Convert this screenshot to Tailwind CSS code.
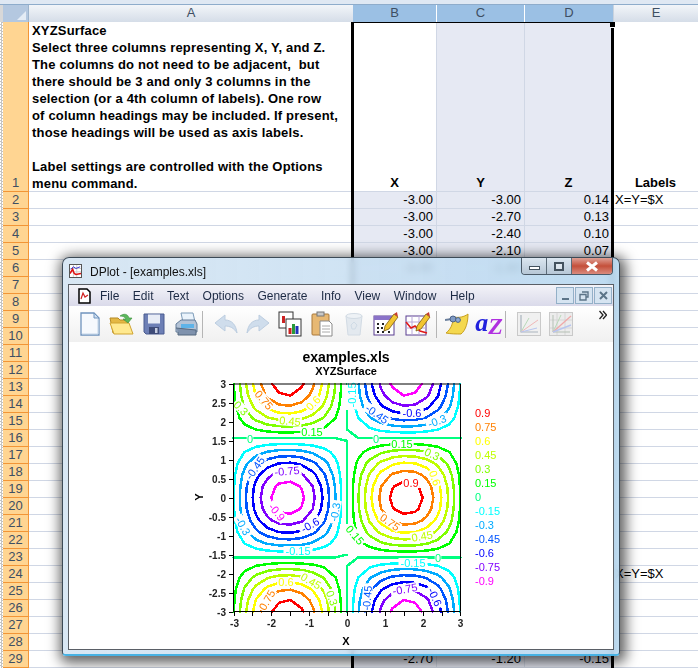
<!DOCTYPE html>
<html lang="en">
<head>
<meta charset="UTF-8" />
<title>DPlot - examples.xls</title>
<script src="https://cdn.jsdelivr.net/npm/@tailwindcss/browser@4"></script>
</head>
<body class="relative w-[698px] h-[668px] overflow-hidden bg-white font-['Liberation_Sans',sans-serif] text-black">

<!-- Spreadsheet -->
<div class="h-[5px] bg-[#dfe8f3] border-b border-[#8eaccb]"></div>
<div class="flex h-[17px] text-[13px] leading-[16px] text-[#3e4f63] text-center">
	<div class="w-[3px] bg-[#d8d8d8]"></div>
	<div class="w-[26px] bg-[#b4c8e0] border-r border-[#9db4cc] flex items-end justify-end p-[2px]"><div class="w-0 h-0 border-l-[9px] border-l-transparent border-b-[9px] border-b-[#e4ecf5]"></div></div>
	<div class="w-[324px] bg-linear-to-b from-[#f2f5f9] to-[#d5dde8]">A</div>
	<div class="w-[84px] bg-[#9bc0e4] border-r border-white">B</div>
	<div class="w-[88px] bg-[#9bc0e4] border-r border-white">C</div>
	<div class="w-[88px] bg-[#9bc0e4]">D</div>
	<div class="flex-1 bg-linear-to-b from-[#f2f5f9] to-[#d5dde8] border-l border-[#c8d2de]">E</div>
</div>
<div class="flex h-[170px] text-[13px] leading-[17px]">
	<div class="w-[3px] bg-[repeating-conic-gradient(#c4c4c4_0_25%,#ffffff_0_50%)] bg-[length:3px_3px]"></div>
	<div class="w-[26px] bg-[#ffd592] border-r border-b border-[#f29536] text-[#3e4f63] text-center flex items-end justify-center">1</div>
	<div class="w-[324px] border-b border-[#d0d7e5] pl-[3px] font-bold tracking-[0.18px]">
		XYZSurface<br />
		Select three columns representing X, Y, and Z.<br />
		The columns do not need to be adjacent,&nbsp; but<br />
		there should be 3 and only 3 columns in the<br />
		selection (or a 4th column of labels). One row<br />
		of column headings may be included. If present,<br />
		those headings will be used as axis labels.<br />
		<br />
		Label settings are controlled with the Options<br />
		menu command.
	</div>
	<div class="w-[84px] border-r border-b border-[#d0d7e5] flex items-end justify-center font-bold">X</div>
	<div class="w-[88px] bg-[#e6e9f3] border-r border-b border-[#d0d7e5] flex items-end justify-center font-bold">Y</div>
	<div class="w-[88px] bg-[#e6e9f3] border-r border-b border-[#d0d7e5] flex items-end justify-center font-bold">Z</div>
	<div class="flex-1 border-b border-[#d0d7e5] flex items-end justify-center font-bold">Labels</div>
</div>
<div id="rows"></div>

<!-- Selection outline -->
<div class="absolute left-[351px] top-[22px] w-[263px] h-[646px] border-l-[3px] border-r-[3px] border-t border-black"></div>
<div class="absolute left-[610px] top-[22px] w-[5px] h-[6px] bg-black border-b border-white"></div>

<!-- DPlot window -->
<div class="absolute left-[62px] top-[257px] w-[558px] h-[399px] flex flex-col rounded-t-[7px] rounded-b-[4px] border border-[#3c4a56] border-b-[2px] border-b-[#47b2e4] px-[5px] pb-[4px] bg-linear-to-r from-[#d4e4f2]/90 via-[#c8dff2]/85 to-[#b9d9f0]/90 backdrop-blur-[3px] shadow-[2px_3px_13px_4px_rgba(0,0,0,0.62)]">
	<div class="h-[26px] flex">
		<svg class="w-[13px] h-[14px] ml-[1px] mt-[6px] bg-white border border-[#555]" viewBox="0 0 13 14">
			<path d="M0 4H13M0 8H13M4 0V14M8 0V14" stroke="#c9c9c9" stroke-width="1" />
			<path d="M0 10L3 5L5 10L7 11L13 10" stroke="#e01010" stroke-width="1.8" fill="none" />
			<path d="M1 5L4 2L7 4L12 2" stroke="#1a1ad0" stroke-width="1" fill="none" />
		</svg>
		<div class="ml-[8px] mt-[6px] text-[12px] leading-[16px] text-[#111]">DPlot - [examples.xls]</div>
		<div class="ml-auto mr-[1px] flex h-[17px] rounded-b-[4px] overflow-hidden border border-t-0 border-[#4b5a68]">
			<div class="w-[25px] bg-linear-to-b from-[#dbe6f0] to-[#b7c7d6] border-r border-[#5c6b78] flex items-center justify-center"><div class="w-[11px] h-[4px] mt-[4px] bg-white border border-[#44525e]"></div></div>
			<div class="w-[25px] bg-linear-to-b from-[#dbe6f0] to-[#b7c7d6] border-r border-[#5c6b78] flex items-center justify-center"><div class="w-[10px] h-[9px] border-[2px] border-[#44525e] bg-white/40"></div></div>
			<div class="w-[40px] bg-linear-to-b from-[#dd9f95] via-[#c44f3a] to-[#d98a7d] flex items-center justify-center">
				<svg class="w-[14px] h-[11px]" viewBox="0 0 14 11"><path d="M2 1.5L12 9.5M12 1.5L2 9.5" stroke="#fff" stroke-width="3" /></svg>
			</div>
		</div>
	</div>
	<div class="h-[366px] flex flex-col border border-[#5a5f66] bg-white">
		<!-- Menu -->
		<div class="h-[21px] flex items-center bg-linear-to-b from-[#f3f3f8] to-[#dadaea] text-[12px] text-[#1c2a44]">
			<svg class="w-[13px] h-[16px] ml-[9px] mr-[9px]" viewBox="0 0 13 16">
				<path d="M1 1H9L12 4V15H1Z" fill="#fff" stroke="#000" stroke-width="1.5" />
				<path d="M3 11L5 5L7 9L10 7" stroke="#d02020" stroke-width="1.2" fill="none" />
			</svg>
			<div class="flex gap-[13.5px]">
				<span>File</span><span>Edit</span><span>Text</span><span>Options</span><span>Generate</span><span>Info</span><span>View</span><span>Window</span><span>Help</span>
			</div>
			<div class="ml-auto mr-[1px] flex gap-[1px]">
				<div class="w-[18px] h-[17px] bg-[#d6e4f1] border border-[#93b0c8] flex items-end justify-center pb-[3px]"><div class="w-[7px] h-[2px] bg-[#5c7488]"></div></div>
				<div class="w-[18px] h-[17px] bg-[#d6e4f1] border border-[#93b0c8] flex items-center justify-center">
					<svg class="w-[10px] h-[10px]" viewBox="0 0 10 10"><path d="M3 1H9V6H7M1 3.5H7V9H1Z" fill="none" stroke="#5c7488" stroke-width="1.4" /></svg>
				</div>
				<div class="w-[18px] h-[17px] bg-[#d6e4f1] border border-[#93b0c8] flex items-center justify-center">
					<svg class="w-[9px] h-[9px]" viewBox="0 0 9 9"><path d="M1 1L8 8M8 1L1 8" stroke="#5c7488" stroke-width="2" /></svg>
				</div>
			</div>
		</div>
		<!-- Toolbar -->
		<div class="relative h-[36px] flex items-center pl-[5px] bg-linear-to-b from-[#ffffff] to-[#f0f0f0]">
			<div class="w-8 flex justify-center"><svg class="w-[24px] h-[26px]" viewBox="0 0 24 26">
				<path d="M3 2H16L21 7V24H3Z" fill="#f6f9fd" stroke="#6f93bd" stroke-width="1.3" />
				<path d="M16 2V7H21Z" fill="#cfdff0" stroke="#6f93bd" />
				<path d="M4 23H20V8" fill="none" stroke="#c4d5e8" />
			</svg></div>
			<div class="w-8 flex justify-center"><svg class="w-[26px] h-[24px]" viewBox="0 0 26 24">
				<path d="M1 6H9L11 8H19V21H4Z" fill="#e4b844" stroke="#b58a26" />
				<path d="M1 11H20L24 22H5Z" fill="#ffe98f" stroke="#d0a432" />
				<path d="M11 4C15 1 19 2 20 6L23 6L19 11L14 7L17 7C16 5 14 4 11 4Z" fill="#5cb85c" stroke="#3b8f3b" stroke-width=".6" />
			</svg></div>
			<div class="w-8 flex justify-center"><svg class="w-[22px] h-[22px]" viewBox="0 0 22 22">
				<path d="M1 1H21V21H3L1 19Z" fill="#6d7fb5" stroke="#4b5c90" />
				<rect x="5" y="1.5" width="12" height="9" fill="#e8ecf6" />
				<rect x="6" y="14" width="10" height="7" fill="#3e4b78" />
				<rect x="12" y="15" width="2.5" height="5" fill="#c6cde0" />
			</svg></div>
			<div class="w-8 flex justify-center"><svg class="w-[26px] h-[26px]" viewBox="0 0 26 26">
				<path d="M8 2H20L22 11H10Z" fill="#eaf3fb" stroke="#7d9cb9" />
				<path d="M3 13L8 9H22L24 13V21H3Z" fill="#b4c3d6" stroke="#647d99" />
				<path d="M5 21V24H23V19L3 17" fill="#7f92ad" stroke="#55697f" />
				<path d="M8 13H21V17H8Z" fill="#5fb3e8" />
			</svg></div>
			<div class="w-2 flex justify-start"><div class="w-px h-[27px] bg-[#b5b5b5]"></div></div>
			<div class="w-8 flex justify-center"><svg class="w-[24px] h-[20px]" viewBox="0 0 24 20">
				<path d="M1 9L11 1V6C18 6 22 11 23 19C20 14 16 12 11 12V17Z" fill="#cfddec" stroke="#bccde0" />
			</svg></div>
			<div class="w-8 flex justify-center"><svg class="w-[24px] h-[20px]" viewBox="0 0 24 20">
				<path d="M23 9L13 1V6C6 6 2 11 1 19C4 14 8 12 13 12V17Z" fill="#cfddec" stroke="#bccde0" />
			</svg></div>
			<div class="w-8 flex justify-center"><svg class="w-[24px] h-[26px]" viewBox="0 0 24 26">
				<rect x="1" y="1" width="14" height="16" fill="#fff" stroke="#333" />
				<rect x="4" y="5" width="3" height="7" fill="#c22" />
				<rect x="8" y="8" width="15" height="17" fill="#fff" stroke="#333" />
				<rect x="10.5" y="17" width="3" height="6" fill="#c22" />
				<rect x="14" y="13" width="3" height="10" fill="#2a9a3a" />
				<rect x="17.5" y="15" width="3" height="8" fill="#2233bb" />
			</svg></div>
			<div class="w-8 flex justify-center"><svg class="w-[24px] h-[26px]" viewBox="0 0 24 26">
				<rect x="2" y="3" width="17" height="21" rx="1" fill="#e7b873" stroke="#a9783a" />
				<rect x="7" y="1" width="7" height="4" fill="#c8c8c8" stroke="#777" />
				<path d="M10 10H19L22 13V25H10Z" fill="#fff" stroke="#8a8a8a" />
				<path d="M12 15H20M12 18H20M12 21H20" stroke="#aaa" />
			</svg></div>
			<div class="w-8 flex justify-center"><svg class="w-[20px] h-[25px]" viewBox="0 0 20 25">
				<path d="M2 4L4 23H16L18 4Z" fill="#e3e9ef" stroke="#d2dbe4" />
				<ellipse cx="10" cy="4" rx="8" ry="2.5" fill="#eef2f6" stroke="#d2dbe4" />
				<path d="M7 13L10 10L13 13L11 17H8Z" fill="none" stroke="#cfdbe6" />
			</svg></div>
			<div class="w-8 flex justify-center"><svg class="w-[26px] h-[26px]" viewBox="0 0 26 26">
				<rect x="1" y="5" width="20" height="19" fill="#fff" stroke="#5b3f92" />
				<rect x="1" y="5" width="20" height="4" fill="#8a72c8" />
				<path d="M4 13H6M9 13H11M15 13H17M4 17H6M8 17H10M13 17H15M4 21H6M9 21H11M15 21H17" stroke="#222" stroke-width="2" />
				<path d="M12 15L21 3L25 6L16 18L11 20Z" fill="#f2c530" stroke="#7a5a10" stroke-width=".8" />
				<path d="M21 3L25 6L24 1Z" fill="#c83a2a" />
			</svg></div>
			<div class="w-8 flex justify-center"><svg class="w-[26px] h-[26px]" viewBox="0 0 26 26">
				<rect x="1" y="5" width="20" height="19" fill="#fff" stroke="#5b3f92" />
				<path d="M1 11H21M1 17H21M7 5V24M14 5V24" stroke="#b9a8d8" />
				<path d="M1 11L6 17L10 15L15 20L22 22" fill="none" stroke="#e01818" stroke-width="1.6" />
				<path d="M12 15L21 3L25 6L16 18L11 20Z" fill="#f2c530" stroke="#7a5a10" stroke-width=".8" />
				<path d="M21 3L25 6L24 1Z" fill="#c83a2a" />
			</svg></div>
			<div class="w-[7px] flex justify-start pl-[2px]"><div class="w-px h-[27px] bg-[#b5b5b5]"></div></div>
			<div class="w-8 flex justify-center"><svg class="w-[24px] h-[22px]" viewBox="0 0 24 22">
				<path d="M8 4C14 5 19 4 23 1C23 9 21 17 16 21C11 21 6 21 1 20C6 16 8 11 8 4Z" fill="#f4d84e" stroke="#c8a020" />
				<path d="M0 7L7 6" stroke="#6a7f9c" stroke-width="2" />
				<circle cx="8" cy="6" r="3" fill="#7f9ac4" stroke="#4a6188" />
				<circle cx="13" cy="7" r="2.4" fill="#8caad6" stroke="#4a6188" />
			</svg></div>
			<div class="w-8 flex justify-center items-start h-[28px] font-['Liberation_Serif',serif] font-bold italic">
				<span class="text-[26px] leading-[26px] text-[#2222dd]">a</span><span class="text-[24px] leading-[32px] text-[#b030e0]">Z</span>
			</div>
			<div class="w-2 flex justify-start"><div class="w-px h-[27px] bg-[#b5b5b5]"></div></div>
			<div class="w-8 flex justify-center"><svg class="w-[24px] h-[24px]" viewBox="0 0 24 24">
				<rect x=".5" y=".5" width="23" height="23" fill="#f0f0f0" stroke="#c9c9c9" />
				<path d="M4 3V20H21" fill="none" stroke="#a9b4bd" stroke-width="1.2" />
				<path d="M4 20L12 6" stroke="#b9d9b9" /><path d="M4 20L21 8" stroke="#efb7b7" /><path d="M4 20L20 16" stroke="#b7c5ef" />
			</svg></div>
			<div class="w-8 flex justify-center"><svg class="w-[24px] h-[24px]" viewBox="0 0 24 24">
				<rect x=".5" y=".5" width="23" height="23" fill="#ececec" stroke="#c9c9c9" />
				<path d="M8 1V23M16 1V23M1 8H23M1 16H23" stroke="#d6d6d6" />
				<path d="M4 3V20H21" fill="none" stroke="#b5c0b5" />
				<path d="M4 20L12 3" stroke="#b9d9b9" /><path d="M4 20L22 4" stroke="#efa9a9" stroke-width="1.4" /><path d="M4 20L22 13" stroke="#b7c5ef" stroke-width="1.4" />
			</svg></div>
			<svg class="absolute left-[530px] top-[4px] w-[8px] h-[10px]" viewBox="0 0 8 10"><path d="M0.5 1L4 5L0.5 9M4 1L7.5 5L4 9" fill="none" stroke="#222" stroke-width="1.3" /></svg>
		</div>
		<!-- Plot -->
		<svg id="plot" class="block w-[544px] h-[307px] bg-white font-['Liberation_Sans',sans-serif]" viewBox="69 342 544 307" xmlns="http://www.w3.org/2000/svg">
			<g id="contours" fill="none" stroke-width="2.5" stroke-linecap="round" shape-rendering="crispEdges"></g>
			<rect x="345" y="385" width="3" height="25" fill="#fff" />
			<rect x="345" y="524" width="3" height="30" fill="#fff" />
			<g id="labels" font-size="11" text-anchor="middle"></g>
			<path d="M233.5 384V611.5H460.5V384H233.5" fill="none" stroke="#000" />
			<g id="ticks" stroke="#000"></g>
			<g id="axis" font-size="10" font-weight="700" fill="#222"></g>
			<g id="legend" font-size="11"></g>
			<text x="346" y="362" text-anchor="middle" font-size="14" font-weight="700">examples.xls</text>
			<text x="346" y="375" text-anchor="middle" font-size="11" font-weight="700">XYZSurface</text>
			<text x="346" y="645" text-anchor="middle" font-size="11" font-weight="700">X</text>
			<text transform="translate(203 497) rotate(-90)" text-anchor="middle" font-size="11" font-weight="700">Y</text>
		</svg>
	</div>
</div>

<script>
	// Sheet rows: Z = sin(X) * cos(Y), sampled every 0.3. Rows 7-28 sit behind the plot window.
	const rowsEl = document.getElementById('rows');
	let rowsHtml = '';
	for (let r = 2; r <= 29; r++) {
		const n = r - 2;
		const x = -3 + 0.3 * Math.floor(n / 21);
		const y = -3 + 0.3 * (n % 21);
		const z = Math.sin(x) * Math.cos(y);
		const hidden = r >= 7 && r <= 28;
		const label = r === 2 || r === 24 ? 'X=Y=$X' : '';
		rowsHtml += `<div class="flex h-[17px] text-[13px] leading-[16px]">
			<div class="w-[3px] bg-[repeating-conic-gradient(#c4c4c4_0_25%,#ffffff_0_50%)] bg-[length:3px_3px]"></div>
			<div class="w-[26px] bg-[#ffd592] border-r border-b border-[#f29536] text-[#3e4f63] text-center">${r}</div>
			<div class="w-[324px] border-b border-[#d0d7e5]"></div>
			<div class="w-[84px] bg-[#e6e9f3] border-r border-b border-[#d0d7e5] text-right pr-[3px]">${hidden ? '' : x.toFixed(2)}</div>
			<div class="w-[88px] bg-[#e6e9f3] border-r border-b border-[#d0d7e5] text-right pr-[3px]">${hidden ? '' : y.toFixed(2)}</div>
			<div class="w-[88px] bg-[#e6e9f3] border-r border-b border-[#d0d7e5] text-right pr-[3px]">${hidden ? '' : z.toFixed(2)}</div>
			<div class="flex-1 border-b border-[#d0d7e5] pl-[2px]">${label}</div>
		</div>`;
	}
	rowsEl.innerHTML = rowsHtml;

	// Contour plot
	const levels = [
		[0.9, '#ff0000'], [0.75, '#ff8000'], [0.6, '#ffff00'], [0.45, '#c0ff00'], [0.3, '#80ff00'], [0.15, '#00ff00'],
		[0, '#00ff80'], [-0.15, '#00ffff'], [-0.3, '#00aaff'], [-0.45, '#0055ff'], [-0.6, '#0000ff'], [-0.75, '#8000ff'], [-0.9, '#ff00ff'],
	];
	const colorOf = (v) => levels.find((l) => l[0] === v)[1];
	const px = (x) => 233.5 + (x + 3) * 37.833;
	const py = (y) => 384 + (3 - y) * 37.917;
	const val = (i, j) => Math.sin((i - 10) * 0.3) * Math.cos((j - 10) * 0.3);

	const contourHtml = levels.map(([lv, color]) => {
		let d = '';
		for (let i = 0; i < 20; i++) {
			for (let j = 0; j < 20; j++) {
				const c = [[i, j], [i + 1, j], [i + 1, j + 1], [i, j + 1]];
				const v = c.map(([a, b]) => val(a, b));
				const pts = [];
				for (let k = 0; k < 4; k++) {
					const m = (k + 1) % 4;
					if ((v[k] >= lv) !== (v[m] >= lv)) {
						const t = (lv - v[k]) / (v[m] - v[k]);
						const gx = c[k][0] + (c[m][0] - c[k][0]) * t;
						const gy = c[k][1] + (c[m][1] - c[k][1]) * t;
						pts.push([px((gx - 10) * 0.3), py((gy - 10) * 0.3)]);
					}
				}
				for (let k = 0; k + 1 < pts.length; k += 2) {
					d += `M${pts[k][0].toFixed(1)} ${pts[k][1].toFixed(1)}L${pts[k + 1][0].toFixed(1)} ${pts[k + 1][1].toFixed(1)}`;
				}
			}
		}
		return `<path d="${d}" stroke="${color}" />`;
	}).join('');
	document.getElementById('contours').innerHTML = contourHtml;

	// text, value, x, y, rotation
	const labels = [
		['0.75', 0.75, 264, 400, 50], ['0.6', 0.6, 313, 403, -45], ['0.3', 0.3, 241, 408, 45], ['0.45', 0.45, 290, 421, 5],
		['0.15', 0.15, 312, 432, 0], ['0', 0, 250, 439, 0], ['-0.45', -0.45, 255, 468, -55], ['-0.75', -0.75, 287, 471, -5],
		['-0.15', -0.15, 352, 395, -90], ['-0.45', -0.45, 377, 414, 35], ['-0.6', -0.6, 412, 413, 0], ['-0.3', -0.3, 437, 421, -20],
		['0', 0, 376, 439, 0], ['0.15', 0.15, 402, 444, 0], ['0.3', 0.3, 432, 454, 25], ['0.6', 0.6, 435, 478, 70], ['0.9', 0.9, 411, 483, 0],
		['-0.9', -0.9, 277, 512, 50], ['-0.6', -0.6, 310, 525, -30], ['-0.3', -0.3, 335, 512, -80], ['-0.3', -0.3, 243, 526, 60],
		['-0.15', -0.15, 298, 551, 0], ['0.6', 0.6, 286, 582, 0], ['0.45', 0.45, 311, 581, 30], ['0.3', 0.3, 332, 598, 70], ['0.75', 0.75, 267, 600, -60],
		['0.75', 0.75, 390, 522, 35], ['0.45', 0.45, 422, 536, -10], ['0.15', 0.15, 355, 535, 50], ['0', 0, 438, 558, 0],
		['-0.15', -0.15, 413, 563, 0], ['-0.75', -0.75, 405, 589, -10], ['-0.6', -0.6, 435, 597, 65], ['-0.45', -0.45, 367, 598, -85],
	];
	document.getElementById('labels').innerHTML = labels.map(([t, v, x, y, r]) => {
		const w = t.length * 5.6 + 1;
		return `<g transform="translate(${x} ${y}) rotate(${r})"><rect x="${-w / 2}" y="-5" width="${w}" height="10" fill="#fff" /><text y="4" fill="${colorOf(v)}">${t}</text></g>`;
	}).join('');

	let ticks = '';
	let axis = '';
	for (let k = 0; k <= 12; k++) {
		const v = 3 - k * 0.5;
		const yy = Math.round(py(v)) + 0.5;
		const xx = Math.round(px(-v)) + 0.5;
		ticks += `<path d="M229 ${yy}H233M${xx} 612V616" />`;
		axis += `<text x="226" y="${yy + 3.5}" text-anchor="end">${v}</text>`;
		if (k % 2 === 0) axis += `<text x="${xx}" y="627" text-anchor="middle">${-v}</text>`;
	}
	document.getElementById('ticks').innerHTML = ticks;
	document.getElementById('axis').innerHTML = axis;

	document.getElementById('legend').innerHTML = levels.map(([lv, color], i) =>
		`<text x="475" y="${417 + i * 14}" fill="${color}">${lv}</text>`
	).join('');
</script>
</body>
</html>
